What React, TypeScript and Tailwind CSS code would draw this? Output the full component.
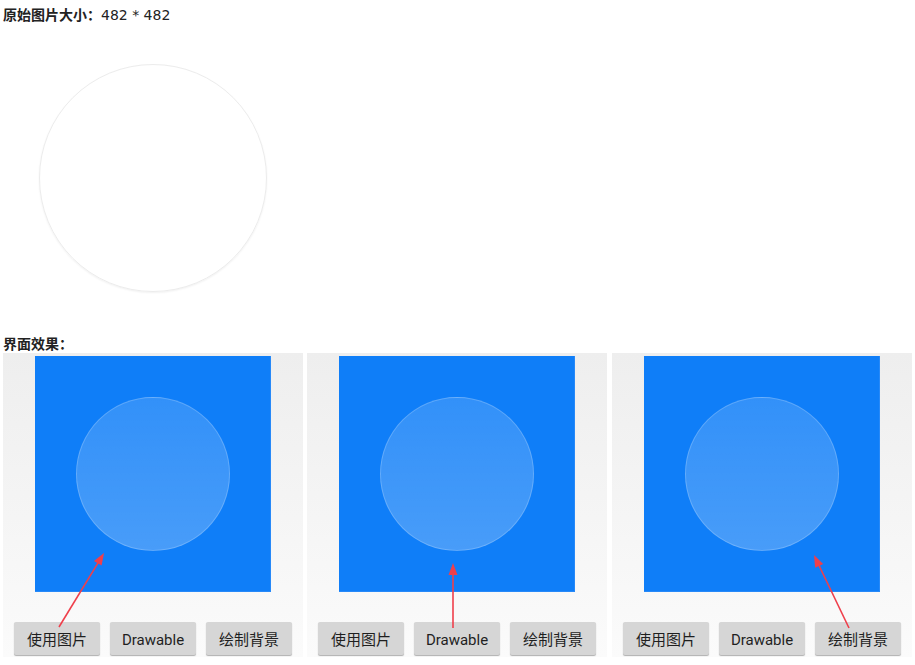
import React from "react";

type Arrow = { x1: number; y1: number; x2: number; y2: number };

function ArrowSvg({ a }: { a: Arrow }) {
  const dx = a.x2 - a.x1;
  const dy = a.y2 - a.y1;
  const len = Math.sqrt(dx * dx + dy * dy);
  const ux = dx / len;
  const uy = dy / len;
  const hl = 12;
  const hw = 4.5;
  const bx = a.x2 - ux * hl;
  const by = a.y2 - uy * hl;
  const px = -uy;
  const py = ux;
  const pts = `${a.x2},${a.y2} ${bx + px * hw},${by + py * hw} ${bx - px * hw},${by - py * hw}`;
  return (
    <svg className="absolute left-0 top-0 pointer-events-none" width={300} height={304}>
      <line x1={a.x1} y1={a.y1} x2={bx + ux * 2} y2={by + uy * 2} stroke="#ef3f4b" strokeWidth={1.6} />
      <polygon points={pts} fill="#ef3f4b" />
    </svg>
  );
}

function Panel({ arrow }: { arrow: Arrow }) {
  return (
    <div className="relative w-[300px] h-[304px] bg-gradient-to-b from-[#eeeeee] to-[#fbfbfb] pt-[3px]">
      <div className="ml-[32px] w-[236px] h-[236px] bg-[#0f7ef8] flex items-center justify-center border-r border-b border-[#4a9cf7]/40">
        <div className="w-[154px] h-[154px] rounded-full bg-gradient-to-b from-white/[0.15] to-white/[0.24] border border-white/20"></div>
      </div>
      <div className="mt-[30px] px-[11px] flex justify-between">
        {["使用图片", "Drawable", "绘制背景"].map((t) => (
          <div
            key={t}
            className="w-[86px] h-[33px] pt-[3px] bg-[#d6d6d6] rounded-[2px] shadow-[0_1px_1px_rgba(0,0,0,0.3)] flex items-center justify-center text-[15px] text-[#1f1f1f] font-['Roboto','Noto_Sans_CJK_SC',sans-serif]"
          >
            {t}
          </div>
        ))}
      </div>
      <ArrowSvg a={arrow} />
    </div>
  );
}

export default function App() {
  return (
    <div className="w-[915px] h-[665px] bg-white overflow-hidden font-['DejaVu_Sans','Noto_Sans_CJK_SC',sans-serif] text-[#222]">
      <div className="pt-[4px] pl-[3px] text-[14px] leading-[20px]">
        <span className="font-bold font-['Noto_Sans_CJK_SC',sans-serif]">原始图片大小：</span>
        <span>482 * 482</span>
      </div>
      <div className="ml-[39px] mt-[39px] w-[228px] h-[228px] rounded-full border-[1.5px] border-[#ececec] shadow-[0_1px_2px_rgba(0,0,0,0.06)]"></div>
      <div className="mt-[41px] pl-[3px] text-[14px] leading-[20px] font-bold font-['Noto_Sans_CJK_SC',sans-serif]">
        界面效果：
      </div>
      <div className="flex pl-[3px]">
        <Panel arrow={{ x1: 56, y1: 274, x2: 101, y2: 200 }} />
        <div className="ml-[4px]">
          <Panel arrow={{ x1: 146, y1: 275, x2: 146, y2: 210 }} />
        </div>
        <div className="ml-[5px]">
          <Panel arrow={{ x1: 237, y1: 275, x2: 202, y2: 202 }} />
        </div>
      </div>
    </div>
  );
}
